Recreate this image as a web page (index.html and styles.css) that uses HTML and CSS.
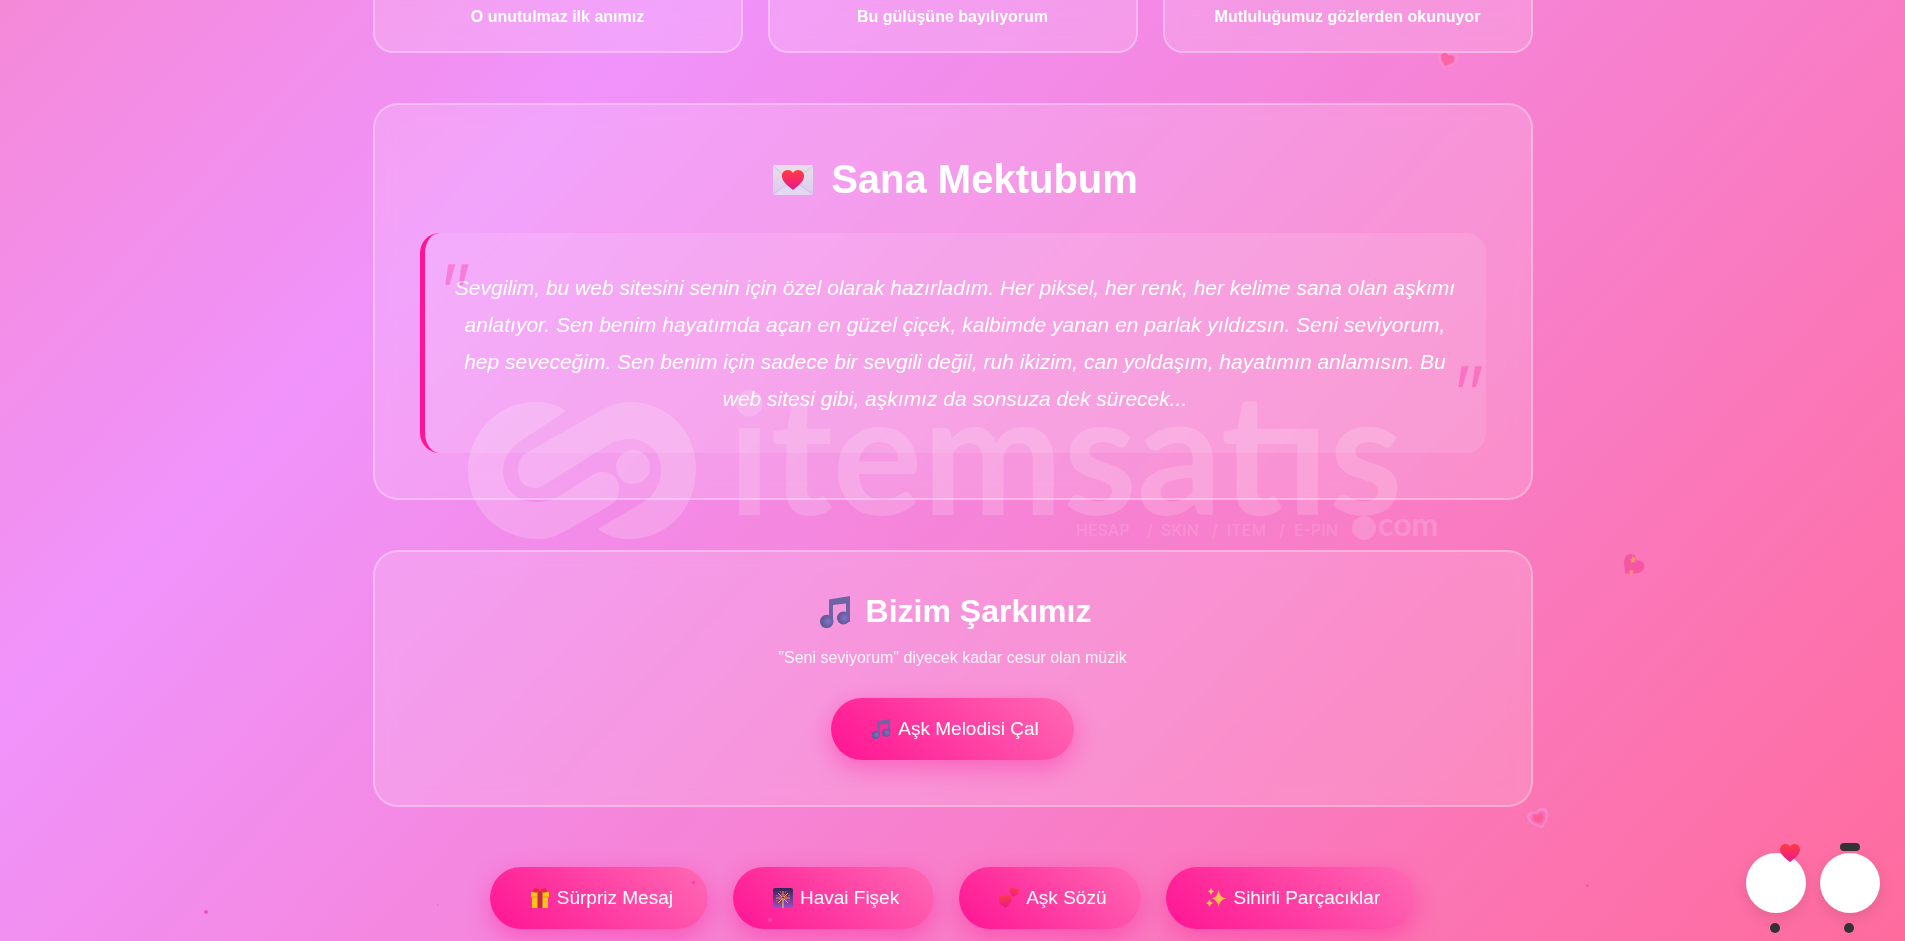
FILE: index.html
```html
<!DOCTYPE html>
<html lang="tr">
<head>
  <meta charset="UTF-8">
  <meta name="viewport" content="width=device-width, initial-scale=1.0">
  <title>Sana Mektubum</title>
  <link rel="stylesheet" href="styles.css">
</head>
<body>
  <svg width="0" height="0" class="defs" aria-hidden="true">
    <defs>
      <linearGradient id="red" x1="0" y1="0" x2="0" y2="1">
        <stop offset="0" stop-color="#ff3b41"/>
        <stop offset="1" stop-color="#e8188e"/>
      </linearGradient>
      <radialGradient id="ball" cx="0.6" cy="0.5" r="0.6">
        <stop offset="0" stop-color="#8072c4"/>
        <stop offset="1" stop-color="#5c5490"/>
      </radialGradient>
      <linearGradient id="paper" x1="0" y1="0" x2="0" y2="1">
        <stop offset="0" stop-color="#e8e0e6"/>
        <stop offset="1" stop-color="#dccaf0"/>
      </linearGradient>
      <linearGradient id="night" x1="0" y1="0" x2="0" y2="1">
        <stop offset="0" stop-color="#33264e"/>
        <stop offset="1" stop-color="#9a50c8"/>
      </linearGradient>
      <linearGradient id="gold" x1="0" y1="0" x2="1" y2="1">
        <stop offset="0" stop-color="#ffd84a"/>
        <stop offset="1" stop-color="#ffae52"/>
      </linearGradient>
      <symbol id="heart" viewBox="0 0 20 18">
        <path d="M10 18C6 15 0 10.500 0 5.500 0 2.500 2.300 0 5.300 0 7.300 0 9 1 10 2.600 11 1 12.700 0 14.700 0 17.700 0 20 2.500 20 5.500 20 10.500 14 15 10 18Z"/>
      </symbol>
      <symbol id="note" viewBox="0 0 30 32">
        <path d="M9 3.500 30 0V26H26V7.500L13 9V27H9Z" fill="#6e64a4"/>
        <circle cx="6.700" cy="25.500" r="6.700" fill="url(#ball)"/>
        <circle cx="23.500" cy="22" r="6.500" fill="url(#ball)"/>
      </symbol>
    </defs>
  </svg>

  <div class="hearts" aria-hidden="true">
    <svg class="floating f1" viewBox="0 0 24 22"><use href="#heart" width="24" height="22" fill="#ff8fd0"/><use href="#heart" x="4" y="4" width="16" height="14" fill="#ff4f86"/></svg>
    <svg class="floating f2" viewBox="0 0 24 22"><use href="#heart" width="24" height="22" fill="#f23f92"/><path d="M5 2l3 1 2-3 0 4 3 1-3 1 0 4-2-3-3 1 2-3zM13 15l2 0 2-2 0 3 2 1-2 1 0 2-2-2-2 1 1-2z" fill="#ffb04a"/></svg>
    <svg class="floating f3" viewBox="0 0 24 22"><use href="#heart" width="24" height="22" fill="#ff96dc"/><use href="#heart" x="3" y="3" width="18" height="16" fill="#fb6cc0"/><use href="#heart" x="6" y="5" width="12" height="11" fill="#ff4f86"/></svg>
  </div>

  <main class="container">
    <section class="gallery">
      <div class="photo">O unutulmaz ilk anımız</div>
      <div class="photo">Bu gülüşüne bayılıyorum</div>
      <div class="photo">Mutluluğumuz gözlerden okunuyor</div>
    </section>

    <section class="card letter">
      <h2>
        <svg class="emoji" viewBox="0 0 40 40" aria-hidden="true">
          <rect y="5" width="40" height="30" rx="2" fill="url(#paper)"/>
          <path d="M0 34 16 23M40 34 24 23M0 6l14 11M40 6 26 17" stroke="#cfc2dd" fill="none"/>
          <path d="M1 35 14 25Q20 22 26 25L39 35Z" fill="#e5d8f7"/>
          <use href="#heart" x="8" y="10" width="24" height="20" fill="url(#red)"/>
        </svg>
        Sana Mektubum
      </h2>
      <div class="letter-text">
        Sevgilim, bu web sitesini senin için özel olarak hazırladım. Her piksel, her renk, her kelime sana olan aşkımı anlatıyor. Sen benim hayatımda açan en güzel çiçek, kalbimde yanan en parlak yıldızsın. Seni seviyorum, hep seveceğim. Sen benim için sadece bir sevgili değil, ruh ikizim, can yoldaşım, hayatımın anlamısın. Bu web sitesi gibi, aşkımız da sonsuza dek sürecek...
      </div>
    </section>

    <section class="card music">
      <h3>
        <svg class="emoji" viewBox="0 0 30 32" aria-hidden="true"><use href="#note" width="30" height="32"/></svg>
        Bizim Şarkımız
      </h3>
      <p>"Seni seviyorum" diyecek kadar cesur olan müzik</p>
      <button class="btn" type="button">
        <svg class="emoji" viewBox="0 0 30 32" aria-hidden="true"><use href="#note" width="30" height="32"/></svg>
        Aşk Melodisi Çal
      </button>
    </section>

    <section class="actions">
      <button class="btn" type="button">
        <svg class="emoji" viewBox="0 0 20 20" aria-hidden="true">
          <path d="M1 4H19V9H18V20H2V9H1Z" fill="#fcc21b"/>
          <path d="M1 8.500H19V9.500H1Z" fill="#dd9a12"/>
          <path d="M7.500 4H12.500V20H7.500Z" fill="#c62848"/>
          <path d="M10 4C7 5 3 5 3 2.500 3-1 9 0 10 3 11 0 17-1 17 2.500 17 5 13 5 10 4Z" fill="#e8283c"/>
        </svg>
        Sürpriz Mesaj
      </button>
      <button class="btn" type="button">
        <svg class="emoji" viewBox="0 0 20 20" aria-hidden="true">
          <rect width="20" height="20" rx="2" fill="url(#night)"/>
          <path d="M10 10V20" stroke="#d9a06a" stroke-width="1.500"/>
          <path d="M10 3V9M3 10H9M17 10H11M5 5l4 4M15 5l-4 4M5 15l4-4M15 15l-4-4" stroke="#f0a63c"/>
          <path d="M7 3l2 5M13 3l-2 5M3 7l5 2M17 7l-5 2M3 13l5-2M17 13l-5-2" stroke="#d8489a" stroke-dasharray="2 1"/>
        </svg>
        Havai Fişek
      </button>
      <button class="btn" type="button">
        <svg class="emoji" viewBox="0 0 20 20" aria-hidden="true">
          <use href="#heart" x="-1" y="7" width="14" height="13" fill="url(#red)" transform="rotate(-8 6 13)"/>
          <use href="#heart" x="10" y="0" width="10" height="9" fill="url(#red)" transform="rotate(14 15 4)"/>
        </svg>
        Aşk Sözü
      </button>
      <button class="btn" type="button">
        <svg class="emoji" viewBox="0 0 20 20" aria-hidden="true">
          <path d="M12.500 2Q13.500 9 20 10.500 13.500 12 12.500 19 11.500 12 6 10.500 11.500 9 12.500 2ZM5 0Q5.500 3 8 3.500 5.500 4 5 7 4.500 4 2 3.500 4.500 3 5 0ZM3.500 11Q4 14 7 15 4 16 3.500 19 3 16 0 15 3 14 3.500 11Z" fill="url(#gold)"/>
        </svg>
        Sihirli Parçacıklar
      </button>
    </section>
  </main>

  <div class="particles" aria-hidden="true">
    <span class="particle p1"></span>
    <span class="particle p2"></span>
    <span class="particle p3"></span>
    <span class="particle p4"></span>
    <span class="particle p5"></span>
  </div>

  <svg class="watermark" viewBox="0 0 970 138" fill="#fff">
    <g opacity="0.18">
      <path d="M98 9C90 3 80 0 68 0 30 0 0 31 0 69S31 137 70 137C80 137 88 134 97 129L141 104C148 100 151 94 151 86 151 76 144 70 134 70 130 70 127 71 123 74L93 93C86 98 78 100 68 100 49 100 35 87 35 69 35 56 42 46 54 38Z"/>
      <path d="M161 0C151 0 142 3 134 8L60 50C53 54 50 61 50 69 50 79 57 86 67 86 71 86 74 84 78 82L140 43C146 39 153 37 161 37 180 37 193 50 193 67 193 81 188 91 177 99L130 127C139 134 149 137 161 137 200 137 228 106 228 67S199 0 161 0Z"/>
      <circle cx="165" cy="65" r="17"/>
    </g>
    <g opacity="0.16">
      <text class="wm-name" x="260" y="113">itemsatıs</text>
      <circle cx="896" cy="126" r="12"/>
      <text class="wm-com" x="910" y="134">com</text>
    </g>
    <g class="wm-tag" opacity="0.13">
      <text x="608" y="134">HESAP</text>
      <text x="679" y="134">/</text>
      <text x="693" y="134">SKIN</text>
      <text x="744" y="134">/</text>
      <text x="759" y="134">ITEM</text>
      <text x="811" y="134">/</text>
      <text x="826" y="134">E-PIN</text>
    </g>
  </svg>

  <div class="couple" aria-hidden="true">
    <div class="character girl"><svg class="love" viewBox="0 0 20 18"><use href="#heart" width="20" height="18" fill="url(#red)"/></svg></div>
    <div class="character boy"></div>
  </div>
</body>
</html>
```
FILE: styles.css
```css
* {
  margin: 0;
  padding: 0;
  box-sizing: border-box;
}

body {
  min-height: 100vh;
  font-family: "Liberation Sans", Arial, sans-serif;
  color: #fff;
  background: linear-gradient(133deg, #f589d8 0%, #f093fb 24%, #ff6b9d 100%);
  overflow-x: hidden;
}

.defs {
  position: absolute;
}

.container {
  position: relative;
  max-width: 1200px;
  margin: 0 auto;
  padding: 0 20px;
}

/* photo cards */
.gallery {
  display: grid;
  grid-template-columns: repeat(3, 1fr);
  gap: 25px;
  margin-bottom: 50px;
}

.photo {
  padding: 8px 20px 25px;
  font-size: 16px;
  font-weight: bold;
  line-height: 18px;
  text-align: center;
  background: rgba(255, 255, 255, 0.15);
  backdrop-filter: blur(10px);
  border: 2px solid rgba(255, 255, 255, 0.3);
  border-top: none;
  border-radius: 0 0 20px 20px;
}

.card {
  margin-bottom: 50px;
  text-align: center;
  background: rgba(255, 255, 255, 0.15);
  backdrop-filter: blur(10px);
  border: 2px solid rgba(255, 255, 255, 0.3);
  border-radius: 25px;
}

.emoji {
  flex: none;
}

/* letter */
.letter {
  padding: 45px;
}

.letter h2 {
  display: flex;
  justify-content: center;
  align-items: center;
  font-size: 40px;
  line-height: 59px;
  margin-bottom: 24px;
}

.letter h2 .emoji {
  width: 40px;
  height: 40px;
  margin: 0 18px 0 6px;
}

.letter-text {
  position: relative;
  padding: 36px 28px;
  font-size: 21px;
  font-style: italic;
  line-height: 37px;
  background: rgba(255, 255, 255, 0.1);
  border-left: 5px solid #ff1493;
  border-radius: 20px;
}

.letter-text::before,
.letter-text::after {
  content: '"';
  position: absolute;
  font-family: "Open Sans", sans-serif;
  font-size: 80px;
  line-height: 80px;
  color: #ff1493;
  opacity: 0.3;
}

.letter-text::before {
  top: 18px;
  left: 12px;
}

.letter-text::after {
  right: 5px;
  bottom: 20px;
}

/* song */
.music {
  padding: 35px;
  margin-bottom: 60px;
}

.music h3 {
  display: flex;
  justify-content: center;
  align-items: center;
  font-size: 32px;
  line-height: 49px;
  margin-bottom: 12px;
}

.music h3 .emoji {
  width: 32px;
  height: 32px;
  margin: 0 15px 0 5px;
}

.music p {
  font-size: 16px;
  line-height: 20px;
  margin-bottom: 30px;
  opacity: 0.9;
}

.music .btn {
  margin: 0 auto 10px;
}

.btn {
  display: flex;
  align-items: center;
  padding: 19px 35px;
  font-family: inherit;
  font-size: 19px;
  line-height: 24px;
  color: #fff;
  background: linear-gradient(45deg, #ff1493, #ff69b4);
  border: none;
  border-radius: 31px;
  box-shadow: 0 8px 25px rgba(255, 20, 147, 0.4);
  cursor: pointer;
}

.btn .emoji {
  width: 20px;
  height: 20px;
  margin: 0 7px 0 5px;
}

.actions {
  display: flex;
  flex-wrap: wrap;
  justify-content: center;
  gap: 25px;
}

/* floating hearts behind the cards */
.floating {
  position: fixed;
  width: 22px;
  height: 20px;
  opacity: 0.6;
}

.f1 {
  left: 75.400%;
  top: 50px;
  transform: rotate(20deg);
}

.f2 {
  left: 85.100%;
  top: 556px;
  transform: rotate(40deg);
}

.f3 {
  left: 80.200%;
  top: 809px;
  transform: rotate(-20deg);
}

.particle {
  position: fixed;
  width: 4px;
  height: 4px;
  border-radius: 50%;
  background: #ff1493;
  opacity: 0.5;
}

.p1 {
  left: 204px;
  top: 910px;
}

.p2 {
  left: 437px;
  top: 904px;
  width: 2px;
  height: 2px;
  opacity: 0.2;
}

.p3 {
  left: 692px;
  top: 881px;
  width: 3px;
  height: 3px;
}

.p4 {
  left: 768px;
  top: 918px;
  background: #ff69b4;
}

.p5 {
  left: 1586px;
  top: 884px;
  width: 3px;
  height: 3px;
  opacity: 0.3;
}

.watermark {
  position: fixed;
  top: 50%;
  left: 50%;
  width: 970px;
  height: 138px;
  overflow: visible;
  transform: translate(-50%, -50%);
  pointer-events: none;
}

.wm-name {
  font: 700 168px Lato, sans-serif;
}

.wm-com {
  font: 700 32px Lato, sans-serif;
}

.wm-tag {
  font: 500 16px Inter, sans-serif;
}

/* little couple in the corner */
.couple {
  position: fixed;
  right: 25px;
  bottom: 28px;
  display: flex;
  gap: 14px;
}

.character {
  position: relative;
  width: 60px;
  height: 60px;
  border-radius: 50%;
  background: #fff;
  box-shadow: 0 5px 15px rgba(0, 0, 0, 0.1);
}

.character::after {
  content: "";
  position: absolute;
  left: 24px;
  bottom: -20px;
  width: 10px;
  height: 10px;
  border-radius: 50%;
  background: #333;
}

.boy::before {
  content: "";
  position: absolute;
  left: 20px;
  top: -10px;
  width: 20px;
  height: 8px;
  border-radius: 4px;
  background: #333;
}

.love {
  position: absolute;
  left: 34px;
  top: -9px;
  width: 20px;
  height: 18px;
}
```
